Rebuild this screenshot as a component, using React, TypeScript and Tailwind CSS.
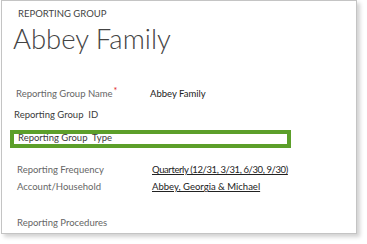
export default function App() {
  const font = { fontFamily: 'Lato, "Open Sans", sans-serif' };
  return (
    <div className="w-[367px] h-[244px] bg-white" style={font}>
      <div className="ml-[1px] w-[356px] h-[234px] border border-[#c4c4c4] bg-white shadow-[3px_3px_4px_rgba(0,0,0,0.18)] flex flex-col">
        <div className="pl-[16px] pt-[7px] text-[9.5px] leading-[12px] text-[#444]">REPORTING GROUP</div>
        <div className="pl-[11px] mt-[4px] text-[27.5px] leading-[30px] font-light text-[#444]">Abbey Family</div>
        <div className="mt-[34px] h-[12px] flex items-baseline text-[9.5px] leading-[12px]">
          <span className="pl-[14px] w-[148px] text-[#666]">
            Reporting Group Name<span className="text-[#e02020] text-[9px] leading-[0] relative top-[-3px] ml-[1px]">*</span>
          </span>
          <span className="text-[#222]">Abbey Family</span>
        </div>
        <div className="mt-[9px] pl-[12px] text-[9.5px] leading-[12px] text-[#3a3a3a]">Reporting Group&nbsp; ID</div>
        <div className="mt-[9px] ml-[8px] w-[281px] h-[18px] border-[4px] border-[#5c9f2a] pl-[4px] text-[9.5px] leading-[8px] text-[#3a3a3a]">
          Reporting Group&nbsp; Type
        </div>
        <div className="mt-[16px] flex text-[9.5px] leading-[12px]">
          <span className="pl-[15px] w-[150px] text-[#666]">Reporting Frequency</span>
          <span className="text-[#222] underline underline-offset-[1px] tracking-[-0.4px]">Quarterly (12/31, 3/31, 6/30, 9/30)</span>
        </div>
        <div className="mt-[5px] flex text-[9.5px] leading-[12px]">
          <span className="pl-[15px] w-[150px] text-[#666]">Account/Household</span>
          <span className="text-[#222] underline underline-offset-[1px]">Abbey, Georgia &amp; Michael</span>
        </div>
        <div className="mt-[24px] pl-[15px] text-[9.5px] leading-[12px] text-[#666]">Reporting Procedures</div>
      </div>
    </div>
  );
}
